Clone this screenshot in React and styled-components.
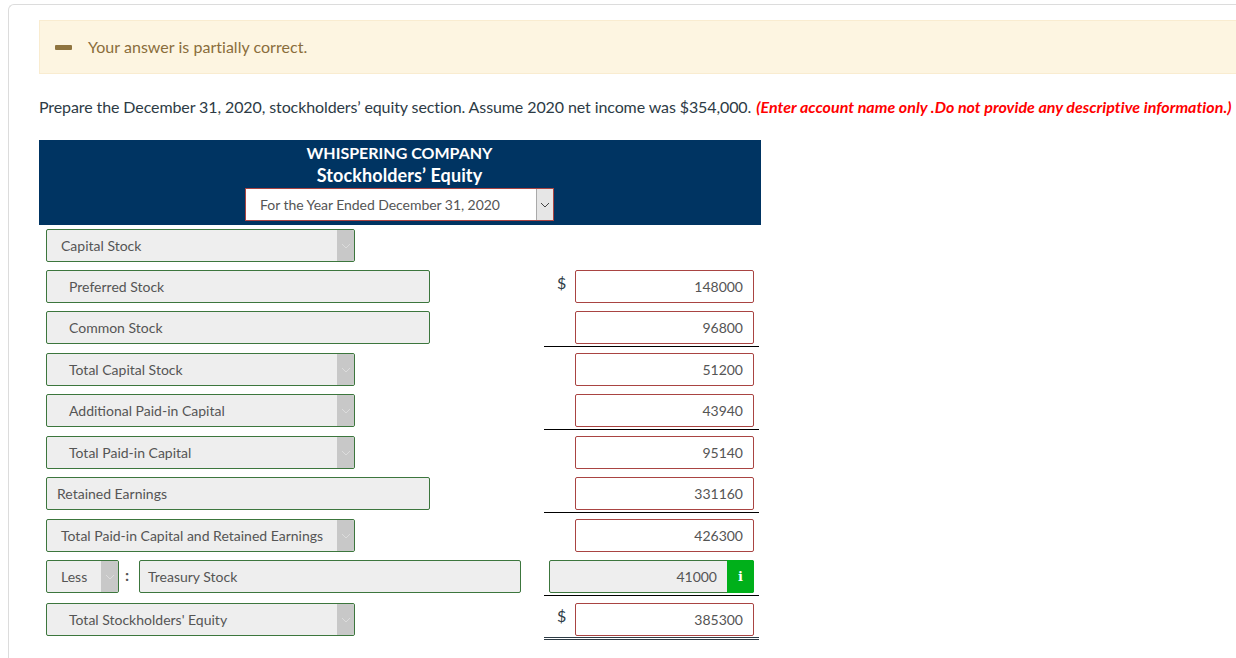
import React from "react";
import styled, { createGlobalStyle } from "styled-components";

const Global = createGlobalStyle`
  html, body {
    margin: 0;
    padding: 0;
    height: 100%;
    overflow: hidden;
    background: #fff;
  }
  body {
    font-family: Lato, "Open Sans", sans-serif;
    color: #2d3b45;
  }
`;

const Card = styled.div`
  box-sizing: border-box;
  margin: 4px 0 0 8px;
  height: 654px;
  border: 1px solid #dcdcdc;
  border-right: none;
  border-bottom: none;
  border-radius: 6px 0 0 0;
  padding: 15px 0 0 30px;
`;

const Banner = styled.div`
  box-sizing: border-box;
  height: 54px;
  display: flex;
  align-items: center;
  padding: 0 0 2px 15px;
  background: #fdf5e1;
  border: 1px solid #f9ecd0;
  border-right: none;
  color: #8a6d3b;
  font-size: 16px;
  letter-spacing: 0.03px;
`;

const Dash = styled.span`
  width: 17px;
  height: 5px;
  margin: 2px 16px 0 0;
  background: #8f743f;
  border-radius: 1px;
`;

const Prompt = styled.p`
  margin: 23px 0 23px;
  font-size: 16px;
  line-height: 20px;
  white-space: nowrap;
  letter-spacing: -0.1px;
`;

const Note = styled.em`
  margin-left: 1px;
  color: #ff0000;
  font-weight: 700;
  letter-spacing: 0.03px;
`;

const Sheet = styled.div`
  width: 722px;
`;

const Header = styled.div`
  box-sizing: border-box;
  height: 85px;
  margin-bottom: 4px;
  padding-top: 2px;
  background: #003462;
  color: #fff;
  font-weight: 700;
  line-height: 22px;
  text-align: center;
`;

const CompanyName = styled.div`
  padding-right: 1px;
  font-size: 16px;
`;

const SheetTitle = styled.div`
  padding-right: 1px;
  font-size: 18px;
  letter-spacing: 0.1px;
`;

const DateSelect = styled.div`
  box-sizing: border-box;
  display: flex;
  align-items: center;
  justify-content: space-between;
  width: 309px;
  height: 33px;
  margin: 2px 0 0 206px;
  padding-left: 14px;
  background: #fff;
  border: 1px solid #a94442;
  color: #555;
  font-weight: 400;
  font-size: 14px;
  letter-spacing: -0.05px;
  text-align: left;
`;

const Caret = styled.span`
  display: flex;
  align-items: center;
  justify-content: center;
  flex: none;
  align-self: stretch;
  width: 16px;
  background: ${(p) => (p.$light ? "#e6e6e6" : "#c8c8c8")};
  border-left: 1px solid ${(p) => (p.$light ? "#aaa" : "#c8c8c8")};
  border-radius: ${(p) => (p.$light ? "0" : "0 2px 2px 0")};
`;

const Row = styled.div`
  display: flex;
  justify-content: space-between;
  height: ${(p) => p.$h}px;
`;

const Left = styled.div`
  display: flex;
  align-items: flex-start;
  padding-left: 7px;
`;

const Field = styled.div`
  box-sizing: border-box;
  display: flex;
  align-items: center;
  justify-content: space-between;
  width: ${(p) => p.$w}px;
  height: 33px;
  padding-left: ${(p) => p.$indent}px;
  background: #eee;
  border: 1px solid #3c763d;
  border-radius: 2px;
  color: #555;
  font-size: 14px;
  white-space: nowrap;
`;

const Colon = styled.span`
  box-sizing: border-box;
  width: 20px;
  padding-right: 4px;
  text-align: center;
  font-size: 16px;
  font-weight: 700;
  line-height: 30px;
  color: #555;
`;

const Right = styled.div`
  box-sizing: border-box;
  display: flex;
  align-items: flex-start;
  width: 215px;
  height: ${(p) => p.$h}px;
  margin-right: 2px;
  padding-left: ${(p) => p.$pad}px;
  border-bottom: ${(p) => p.$rule || "none"};
`;

const Dollar = styled.span`
  box-sizing: border-box;
  width: 31px;
  padding-left: 13px;
  font-size: 16px;
  line-height: 25px;
`;

const Amount = styled.div`
  box-sizing: border-box;
  display: flex;
  align-items: center;
  justify-content: flex-end;
  width: 179px;
  height: 33px;
  padding-right: 10px;
  border: 1px solid #a94442;
  border-radius: 2px;
  color: #555;
  font-size: 14px;
`;

const GreyAmount = styled.div`
  box-sizing: border-box;
  display: flex;
  align-items: center;
  width: 205px;
  height: 33px;
  background: #eee;
  border: 1px solid #3c763d;
  border-radius: 2px;
  color: #555;
  font-size: 14px;
`;

const GreyValue = styled.span`
  flex: 1;
  padding-right: 10px;
  text-align: right;
`;

const InfoBadge = styled.span`
  display: flex;
  align-items: center;
  justify-content: center;
  align-self: stretch;
  width: 27px;
  margin: -1px -1px -1px 0;
  background: #00b01a;
  border-radius: 0 2px 2px 0;
  color: #fff;
  font-family: "DejaVu Serif", serif;
  font-weight: 700;
  font-size: 13px;
`;

const Chevron = ({ color }) => (
  <svg width="10" height="6" viewBox="0 0 10 6" fill="none">
    <polyline points="1,1 5,5 9,1" stroke={color} strokeWidth="1" />
  </svg>
);

const SelectField = ({ width, indent, children }) => (
  <Field $w={width} $indent={indent}>
    {children}
    <Caret>
      <Chevron color="#dcdcdc" />
    </Caret>
  </Field>
);

const SINGLE = "1px solid #000";
const DOUBLE = "3px double #2d3b45";

const rows = [
  { h: 41, label: "Capital Stock", indent: 14, select: true },
  { h: 41, label: "Preferred Stock", indent: 22, wide: true, value: "148000", dollar: true },
  { h: 42, label: "Common Stock", indent: 22, wide: true, value: "96800", rule: SINGLE },
  { h: 41, label: "Total Capital Stock", indent: 22, select: true, value: "51200" },
  { h: 42, label: "Additional Paid-in Capital", indent: 22, select: true, value: "43940", rule: SINGLE },
  { h: 41, label: "Total Paid-in Capital", indent: 22, select: true, value: "95140" },
  { h: 42, label: "Retained Earnings", indent: 10, wide: true, value: "331160", rule: SINGLE },
  { h: 41, label: "Total Paid-in Capital and Retained Earnings", indent: 14, select: true, value: "426300" },
];

const App = () => {
  return (
    <>
      <Global />
      <Card>
        <Banner>
          <Dash />
          Your answer is partially correct.
        </Banner>
        <Prompt>
          Prepare the December 31, 2020, stockholders’ equity section. Assume 2020 net income was $354,000.{" "}
          <Note>(Enter account name only .Do not provide any descriptive information.)</Note>
        </Prompt>
        <Sheet>
          <Header>
            <CompanyName>WHISPERING COMPANY</CompanyName>
            <SheetTitle>Stockholders’ Equity</SheetTitle>
            <DateSelect>
              For the Year Ended December 31, 2020
              <Caret $light>
                <Chevron color="#444" />
              </Caret>
            </DateSelect>
          </Header>

          {rows.map((r) => (
            <Row key={r.label} $h={r.h}>
              <Left>
                {r.select ? (
                  <SelectField width={309} indent={r.indent}>
                    {r.label}
                  </SelectField>
                ) : (
                  <Field $w={384} $indent={r.indent}>
                    {r.label}
                  </Field>
                )}
              </Left>
              {r.value && (
                <Right $h={36} $pad={r.dollar ? 0 : 31} $rule={r.rule}>
                  {r.dollar && <Dollar>$</Dollar>}
                  <Amount>{r.value}</Amount>
                </Right>
              )}
            </Row>
          ))}

          <Row $h={43}>
            <Left>
              <SelectField width={73} indent={14}>
                Less
              </SelectField>
              <Colon>:</Colon>
              <Field $w={382} $indent={8}>
                Treasury Stock
              </Field>
            </Left>
            <Right $h={36} $pad={5} $rule={SINGLE}>
              <GreyAmount>
                <GreyValue>41000</GreyValue>
                <InfoBadge>i</InfoBadge>
              </GreyAmount>
            </Right>
          </Row>

          <Row $h={40}>
            <Left>
              <SelectField width={309} indent={22}>
                Total Stockholders' Equity
              </SelectField>
            </Left>
            <Right $h={37} $pad={0} $rule={DOUBLE}>
              <Dollar>$</Dollar>
              <Amount>385300</Amount>
            </Right>
          </Row>
        </Sheet>
      </Card>
    </>
  );
};

export default App;
